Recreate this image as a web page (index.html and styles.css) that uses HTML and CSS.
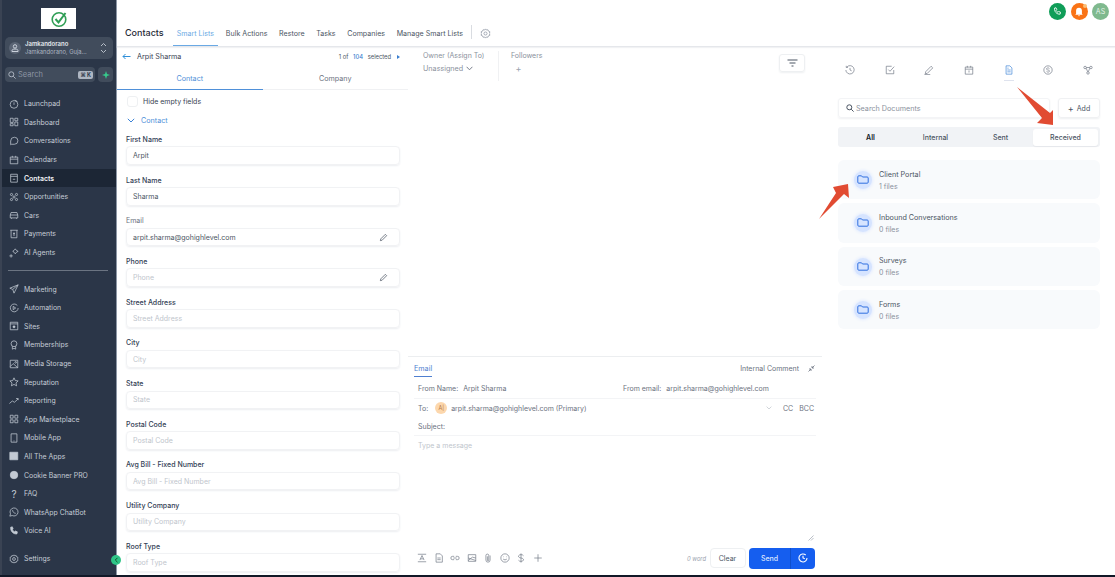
FILE: index.html
```html
<!DOCTYPE html>
<html lang="en">
<head>
    <meta charset="UTF-8">
    <meta name="viewport" content="width=device-width, initial-scale=1.0">
    <title>Contacts</title>
    <link rel="stylesheet" href="styles.css">
</head>
<body>
    <aside class="sidebar">
        <div class="logo">
            <svg width="18" height="18" viewBox="0 0 18 18" fill="none"><circle cx="9" cy="9.5" r="6.8" stroke="#2f9e55" stroke-width="1.6"/><path d="M5.5 9l3 3.4L15.5 3" stroke="#2f9e55" stroke-width="2"/></svg>
        </div>
        <div class="account">
            <span class="account-avatar"><svg width="8" height="8" viewBox="0 0 8 8" fill="none" stroke="#cbd2dc"><circle cx="4" cy="2.4" r="1.7"/><path d="M1 7.5V6.6C1 5.6 2 5 4 5s3 .6 3 1.6v.9z"/></svg></span>
            <div class="account-text">
                <div class="account-name">Jamkandorano</div>
                <div class="account-sub">Jamkandorano, Guja...</div>
            </div>
            <svg width="7" height="12" viewBox="0 0 7 12" fill="none" stroke="#c3cad4" stroke-width=".9"><path d="M1 4l2.5-2.5L6 4M1 8l2.5 2.5L6 8"/></svg>
        </div>
        <div class="search-row">
            <div class="side-search">
                <svg width="8" height="8" viewBox="0 0 8 8" fill="none" stroke="#aab2be"><circle cx="3.3" cy="3.3" r="2.5"/><path d="M5.2 5.2L7.6 7.6"/></svg>
                <span class="side-search-text">Search</span>
                <span class="kbd">⌘ K</span>
            </div>
            <div class="quick"><svg width="8" height="8" viewBox="0 0 8 8" fill="#37c98b"><path d="M4 0l1 3 3 1-3 1-1 3-1-3-3-1 3-1z"/></svg></div>
        </div>
        <nav class="nav">
            <a class="nav-item"><svg viewBox="0 0 12 12"><circle cx="6" cy="6.5" r="4.6"/><path d="M6 4v3M7 1.5l3 1.5"/></svg>Launchpad</a>
            <a class="nav-item"><svg viewBox="0 0 12 12"><path d="M1.5 1.5H5v5H1.5zM7 1.500h3.500v3H7zM7 6h3.500v4.500H7zM1.500 8H5v2.500H1.500z"/></svg>Dashboard</a>
            <a class="nav-item"><svg viewBox="0 0 12 12"><path d="M6.5 1.500a4.200 4.200 0 0 1 0 8.400H3L2 10.500V6a4.500 4.500 0 0 1 4.500-4.500z"/></svg>Conversations</a>
            <a class="nav-item"><svg viewBox="0 0 12 12"><path d="M1.5 2.500h9v8h-9zM1.500 5h9M4 1v2M8 1v2"/></svg>Calendars</a>
            <a class="nav-item active"><svg viewBox="0 0 12 12"><path d="M2 1.500h8V11H2zM2 4h8M4.500 7.500h3"/></svg>Contacts</a>
            <a class="nav-item"><svg viewBox="0 0 12 12"><circle cx="3" cy="3" r="1.3"/><circle cx="9" cy="3" r="1.3"/><circle cx="3" cy="9" r="1.3"/><circle cx="9" cy="9" r="1.3"/><circle cx="6" cy="6" r="1.3"/></svg>Opportunities</a>
            <a class="nav-item"><svg viewBox="0 0 12 12"><path d="M1.5 6l1-3h7l1 3v3.500h-9zM1.500 6h9M3 9.500v1M9 9.500v1"/></svg>Cars</a>
            <a class="nav-item"><svg viewBox="0 0 12 12"><path d="M1.5 1.500h9M2.500 1.500v9h7v-9M6 4v4.500M4.800 5.500h2.400"/></svg>Payments</a>
            <a class="nav-item"><svg viewBox="0 0 12 12"><path d="M2.5 7.500v4M.5 9.500h4M7.500 1L9 3l2 1-2 1-1.500 2L6 5 4.500 4 6 3z"/></svg>AI Agents</a>
            <div class="nav-divider"></div>
            <a class="nav-item"><svg viewBox="0 0 12 12"><path d="M11 1L1 5l3.500 1.500L6 11zM4.500 6.500L11 1"/></svg>Marketing</a>
            <a class="nav-item"><svg viewBox="0 0 12 12"><path d="M10 3a4.700 4.700 0 1 0 1 3M5 4v4l3-2z"/></svg>Automation</a>
            <a class="nav-item"><svg viewBox="0 0 12 12"><path d="M1.5 1.500h9v9h-9zM1.500 3.500h9"/><circle class="solid" cx="6" cy="7" r="1.2"/></svg>Sites</a>
            <a class="nav-item"><svg viewBox="0 0 12 12"><circle cx="6" cy="4.500" r="3.500"/><path d="M4 7.500V11l2-1 2 1V7.500"/></svg>Memberships</a>
            <a class="nav-item"><svg viewBox="0 0 12 12"><path d="M1.500 1.500h9v9h-9zM1.500 9L5 5.500l5.500 5"/><circle cx="8" cy="4" r="1"/></svg>Media Storage</a>
            <a class="nav-item"><svg viewBox="0 0 12 12"><path d="M6 1l1.500 3.300 3.500.4-2.600 2.400.7 3.500L6 8.900l-3.100 1.700.7-3.500L1 4.700l3.500-.4z"/></svg>Reputation</a>
            <a class="nav-item"><svg viewBox="0 0 12 12"><path d="M.5 9L4 6l2.500 1.500L11 3.500M8.500 3H11v2"/></svg>Reporting</a>
            <a class="nav-item"><svg viewBox="0 0 12 12"><path d="M1.500 1.500H5V5H1.500zM7 1.500h3.500V5H7zM1.500 7H5v3.500H1.500zM7 7h3.500v3.500H7z"/></svg>App Marketplace</a>
            <a class="nav-item"><svg viewBox="0 0 12 12"><path d="M2.500 1h7v10h-7zM5.500 9.500h1"/></svg>Mobile App</a>
            <a class="nav-item"><svg viewBox="0 0 12 12"><path class="solid" d="M1 1.500h9.500v9H1z"/></svg>All The Apps</a>
            <a class="nav-item"><svg viewBox="0 0 12 12"><circle class="solid" cx="6" cy="6" r="4.500"/></svg>Cookie Banner PRO</a>
            <a class="nav-item"><span class="nav-glyph">?</span>FAQ</a>
            <a class="nav-item"><svg viewBox="0 0 12 12"><path d="M1 11l.8-2.800a4.800 4.800 0 1 1 2 2z"/><path d="M4.300 3.800c0 2 1.800 3.800 3.800 3.800"/></svg>WhatsApp ChatBot</a>
            <a class="nav-item"><svg viewBox="0 0 12 12"><path class="solid" d="M2 1.500L4 1l1 2.500-1 1c.5 1 1.500 2 2.500 2.500l1-1 2.500 1-.5 2.500C5 10 1.500 6 2 1.500z"/></svg>Voice AI</a>
        </nav>
        <a class="nav-item settings"><svg viewBox="0 0 12 12"><circle cx="6" cy="6" r="1.7"/><path d="M6 1l1 1.200 1.600-.3.600 1.500 1.500.6-.3 1.500L11 6l-.6.500.3 1.500-1.500.6-.6 1.500-1.600-.3L6 11l-1-1.200-1.600.3-.6-1.500-1.500-.6.3-1.500L1 6l.6-.5-.3-1.500 1.500-.6.6-1.500 1.600.3z"/></svg>Settings</a>
        <span class="collapse"><svg width="5" height="6" viewBox="0 0 5 6" fill="none" stroke="#14532d"><path d="M3.500.8L1.300 3l2.200 2.200"/></svg></span>
    </aside>

    <main class="main">
        <div class="topbar">
            <span class="round green"><svg width="9" height="9" viewBox="0 0 12 12" fill="none" stroke="#fff" stroke-width="1.2"><path d="M2 1.500L4 1l1 2.500-1 1c.5 1 1.500 2 2.500 2.500l1-1 2.500 1-.5 2.500C5 10 1.500 6 2 1.500z"/></svg></span>
            <span class="round orange"><svg width="10" height="10" viewBox="0 0 12 12" fill="#fff"><path d="M6 1a3.500 3.500 0 0 1 3.500 3.500V8l1 1.200h-9l1-1.200V4.500A3.500 3.500 0 0 1 6 1zM4.800 10h2.400L6 11.300z"/></svg><i class="dot"></i></span>
            <span class="round sage">AS</span>
        </div>
        <header class="page-head">
            <h1>Contacts</h1>
            <nav class="head-tabs">
                <a class="head-tab current">Smart Lists</a>
                <a class="head-tab">Bulk Actions</a>
                <a class="head-tab">Restore</a>
                <a class="head-tab">Tasks</a>
                <a class="head-tab">Companies</a>
                <a class="head-tab">Manage Smart Lists</a>
            </nav>
            <span class="head-sep"></span>
            <svg class="head-gear" width="11" height="11" viewBox="0 0 12 12" fill="none" stroke="#8b93a0" stroke-width=".8"><circle cx="6" cy="6" r="1.7"/><path d="M6 1l1 1.200 1.600-.3.600 1.500 1.500.6-.3 1.500L11 6l-.6.500.3 1.500-1.500.6-.6 1.500-1.600-.3L6 11l-1-1.200-1.600.3-.6-1.500-1.500-.6.3-1.500L1 6l.6-.5-.3-1.500 1.500-.6.6-1.500 1.600.3z"/></svg>
        </header>

        <div class="columns">
            <section class="contact-panel">
                <div class="contact-head">
                    <svg width="9" height="7" viewBox="0 0 9 7" fill="none" stroke="#2f8fd8"><path d="M8.500 3.500H1M3.500 1L1 3.500 3.500 6"/></svg>
                    <span class="contact-name">Arpit Sharma</span>
                    <span class="pager">1 of <b>104</b> selected</span>
                    <span class="pager-next"></span>
                </div>
                <div class="contact-tabs">
                    <a class="contact-tab current">Contact</a>
                    <a class="contact-tab">Company</a>
                </div>
                <div class="form">
                    <label class="hide-empty"><span class="check"></span>Hide empty fields</label>
                    <div class="section-toggle">
                        <svg width="8" height="5" viewBox="0 0 8 5" fill="none" stroke="#3b82d6"><path d="M.8.800L4 4l3.200-3.200"/></svg>
                        Contact
                    </div>
                    <div class="field"><div class="field-label">First Name</div><div class="input filled">Arpit</div></div>
                    <div class="field"><div class="field-label">Last Name</div><div class="input filled">Sharma</div></div>
                    <div class="field"><div class="field-label light">Email</div><div class="input filled">arpit.sharma@gohighlevel.com<svg class="pen" viewBox="0 0 10 10"><path d="M1.500 8.500l.5-2L7 1.500 8.500 3l-5 5z"/></svg></div></div>
                    <div class="field"><div class="field-label">Phone</div><div class="input">Phone<svg class="pen" viewBox="0 0 10 10"><path d="M1.500 8.500l.5-2L7 1.500 8.500 3l-5 5z"/></svg></div></div>
                    <div class="field"><div class="field-label">Street Address</div><div class="input">Street Address</div></div>
                    <div class="field"><div class="field-label">City</div><div class="input">City</div></div>
                    <div class="field"><div class="field-label">State</div><div class="input">State</div></div>
                    <div class="field"><div class="field-label">Postal Code</div><div class="input">Postal Code</div></div>
                    <div class="field"><div class="field-label">Avg Bill - Fixed Number</div><div class="input">Avg Bill - Fixed Number</div></div>
                    <div class="field"><div class="field-label">Utility Company</div><div class="input">Utility Company</div></div>
                    <div class="field"><div class="field-label">Roof Type</div><div class="input">Roof Type</div></div>
                </div>
            </section>

            <section class="middle">
                <div class="owner-row">
                    <div class="owner">
                        <div class="meta-label">Owner (Assign To)</div>
                        <div class="owner-value">Unassigned <svg width="7" height="5" viewBox="0 0 7 5" fill="none" stroke="#6b7280" stroke-width=".9"><path d="M.6.800L3.500 3.800 6.400.8"/></svg></div>
                    </div>
                    <div class="followers">
                        <div class="meta-label">Followers</div>
                        <span class="add-follower">+</span>
                    </div>
                    <span class="filter-btn"><svg width="11" height="8" viewBox="0 0 11 8" fill="none" stroke="#4b5563"><path d="M.5 1h10M2.500 4h6M4.500 7h2"/></svg></span>
                </div>
                <div class="composer">
                    <div class="composer-tabs">
                        <a class="composer-tab">Email</a>
                        <span class="internal">Internal Comment</span>
                        <svg width="7" height="7" viewBox="0 0 7 7" fill="none" stroke="#6b7280" stroke-width=".8"><path d="M.5 6.500L3 4M1 4h2v2M6.500.5L4 3M6 3H4V1"/></svg>
                    </div>
                    <div class="from-row">
                        <span class="from-name"><em>From Name:</em> Arpit Sharma</span>
                        <span class="from-email"><em>From email:</em> arpit.sharma@gohighlevel.com</span>
                    </div>
                    <div class="to-row">
                        <em>To:</em>
                        <span class="to-chip">A|</span>
                        <span class="to-addr">arpit.sharma@gohighlevel.com (Primary)</span>
                        <svg width="6" height="4" viewBox="0 0 6 4" fill="none" stroke="#c5cad1" stroke-width=".8"><path d="M.6.600L3 3 5.400.6"/></svg>
                        <span class="cc">CC</span>
                        <span class="cc">BCC</span>
                    </div>
                    <div class="subject-row">Subject:</div>
                    <div class="message">
                        Type a message
                        <svg class="resize" width="6" height="6" viewBox="0 0 6 6" fill="none" stroke="#9ca3af" stroke-width=".7"><path d="M.5 5.500l5-5M3 5.500L5.500 3"/></svg>
                    </div>
                    <div class="composer-tools">
                        <svg viewBox="0 0 12 12"><path d="M1 1.500h10M1 10.500h10M3.500 8.500L6 3l2.500 5.500M4.300 7h3.400"/></svg>
                        <svg viewBox="0 0 12 12"><path d="M2.500 1h5L10 3.500V11H2.500zM4 6h4M4 8h4"/></svg>
                        <svg viewBox="0 0 12 12"><path d="M5 4H3a2 2 0 0 0 0 4h2M7 4h2a2 2 0 0 1 0 4H7M4 6h4"/></svg>
                        <svg viewBox="0 0 12 12"><path d="M1.500 2h9v8h-9zM1.500 6l9 3M1.500 9l5-4 4 1"/></svg>
                        <svg viewBox="0 0 12 12"><path d="M8.500 3v5.500a2.500 2.500 0 0 1-5 0V3a1.700 1.700 0 0 1 3.400 0v5.500a.8.800 0 0 1-1.600 0V4"/></svg>
                        <svg viewBox="0 0 12 12"><circle cx="6" cy="6" r="5"/><path d="M3.800 7.200c1 1.300 3.400 1.300 4.400 0M4 4.500h.6M7.400 4.500H8"/></svg>
                        <svg viewBox="0 0 12 12"><path d="M9 3.300C8.500 2.400 7.400 2 6 2 4.300 2 3 2.800 3 4s1.300 1.700 3 2 3 .8 3 2-1.300 2-3 2c-1.400 0-2.500-.4-3-1.300M6 .5v11"/></svg>
                        <svg viewBox="0 0 12 12"><path d="M6 1.500v9M1.500 6h9"/></svg>
                        <span class="word-count">0 word</span>
                        <span class="clear-btn">Clear</span>
                        <span class="send-btn">
                            <span class="send-label">Send</span>
                            <span class="send-later"><svg width="10" height="10" viewBox="0 0 10 10" fill="none" stroke="#fff" stroke-width="1.1"><path d="M9 5a4 4 0 1 1-1.300-3M5 2.800V5l1.800.8"/></svg></span>
                        </span>
                    </div>
                </div>
            </section>

            <section class="docs">
                <div class="docs-icons">
                    <svg viewBox="0 0 12 12"><path d="M2.200 2.500A5 5 0 1 1 1 6M1.500 1v2h2M6 3.500V6l2 1"/></svg>
                    <svg viewBox="0 0 12 12"><path d="M10.500 6v4.500h-9v-9H8M4 5.500l2 2L11 2"/></svg>
                    <svg viewBox="0 0 12 12"><path d="M1.500 10.500l.6-2.500 6.400-6.500 2 2L4 10zM.5 11.500h7"/></svg>
                    <svg viewBox="0 0 12 12"><path d="M1.500 2.500h9V11h-9zM1.500 5h9M4 1v2M8 1v2M6 6.500V9"/></svg>
                    <span class="doc-tab"><svg viewBox="0 0 12 12"><path d="M2.500 1H7l2.500 2.500V11h-7zM4 6h4M4 8.200h4M4 3.800h1.500"/></svg></span>
                    <svg viewBox="0 0 12 12"><circle cx="6" cy="6" r="5"/><path d="M7.800 4.400C7.400 3.800 6.800 3.500 6 3.500c-1 0-1.800.5-1.800 1.200S5 5.800 6 6s1.800.5 1.800 1.300S7 8.500 6 8.500c-.8 0-1.500-.3-1.800-.9"/></svg>
                    <svg viewBox="0 0 12 12"><circle cx="2.500" cy="3" r="1.500"/><circle cx="9.500" cy="3" r="1.500"/><circle cx="6" cy="9.500" r="1.500"/><path d="M3.800 3.800L5.600 8M8.200 3.800L6.400 8M4 3h4"/></svg>
                </div>
                <div class="docs-search-row">
                    <div class="docs-search">
                        <svg width="8" height="8" viewBox="0 0 8 8" fill="none" stroke="#4b5563"><circle cx="3.3" cy="3.3" r="2.5"/><path d="M5.200 5.200l2.400 2.400"/></svg>
                        Search Documents
                    </div>
                    <span class="add-btn"><b>+</b> Add</span>
                </div>
                <div class="docs-filter">
                    <a class="filter-item strong">All</a>
                    <a class="filter-item">Internal</a>
                    <a class="filter-item">Sent</a>
                    <a class="filter-item picked">Received</a>
                </div>
                <div class="folders">
                    <div class="folder">
                        <span class="folder-icon"><svg width="12" height="10" viewBox="0 0 12 10" fill="none" stroke="#2f6fe0"><path d="M.8 1.800a1 1 0 0 1 1-1h2.700l1 1.200h4.700a1 1 0 0 1 1 1v4.200a1 1 0 0 1-1 1H1.800a1 1 0 0 1-1-1z"/></svg></span>
                        <div><div class="folder-name">Client Portal</div><div class="folder-count">1 files</div></div>
                    </div>
                    <div class="folder">
                        <span class="folder-icon"><svg width="12" height="10" viewBox="0 0 12 10" fill="none" stroke="#2f6fe0"><path d="M.8 1.800a1 1 0 0 1 1-1h2.700l1 1.200h4.700a1 1 0 0 1 1 1v4.200a1 1 0 0 1-1 1H1.800a1 1 0 0 1-1-1z"/></svg></span>
                        <div><div class="folder-name">Inbound Conversations</div><div class="folder-count">0 files</div></div>
                    </div>
                    <div class="folder">
                        <span class="folder-icon"><svg width="12" height="10" viewBox="0 0 12 10" fill="none" stroke="#2f6fe0"><path d="M.8 1.800a1 1 0 0 1 1-1h2.700l1 1.200h4.700a1 1 0 0 1 1 1v4.200a1 1 0 0 1-1 1H1.800a1 1 0 0 1-1-1z"/></svg></span>
                        <div><div class="folder-name">Surveys</div><div class="folder-count">0 files</div></div>
                    </div>
                    <div class="folder">
                        <span class="folder-icon"><svg width="12" height="10" viewBox="0 0 12 10" fill="none" stroke="#2f6fe0"><path d="M.8 1.800a1 1 0 0 1 1-1h2.700l1 1.200h4.700a1 1 0 0 1 1 1v4.200a1 1 0 0 1-1 1H1.800a1 1 0 0 1-1-1z"/></svg></span>
                        <div><div class="folder-name">Forms</div><div class="folder-count">0 files</div></div>
                    </div>
                </div>
            </section>
        </div>
    </main>

    <!-- annotation arrows drawn on top of the screenshot -->
    <svg class="arrow arrow-received" width="50" height="50" viewBox="0 0 50 50"><path d="M0 1L33 27 36 24 36 39 20 37 25 32z" fill="#e14b32"/></svg>
    <svg class="arrow arrow-portal" width="40" height="50" viewBox="0 0 40 50"><path d="M0 41L17 15 14 9 29 6 30 20 25 16z" fill="#e14b32"/></svg>
</body>
</html>
```

FILE: styles.css
```css
* {
    box-sizing: border-box;
}
body {
    margin: 0;
    width: 1115px;
    height: 577px;
    overflow: hidden;
    display: flex;
    position: relative;
    font-family: Inter, 'Noto Sans', sans-serif;
    font-size: 7.5px;
    color: #374151;
    background-color: #111827;
}
em {
    font-style: normal;
}

/* sidebar */
.sidebar {
    width: 116px;
    height: 575px;
    flex-shrink: 0;
    position: relative;
    background-color: #2b3648;
    border-left: 2px solid #3a4353;
    padding-top: 8px;
    display: flex;
    flex-direction: column;
    color: #c9d0da;
}
.logo {
    width: 35px;
    height: 21px;
    margin-left: 39px;
    background-color: #fff;
    display: flex;
    justify-content: center;
    align-items: center;
}
.account {
    margin: 8px 3px 0;
    height: 22px;
    border-radius: 5px;
    background-color: #414c5c;
    display: flex;
    align-items: center;
    padding: 0 6px 0 4px;
    gap: 4px;
}
.account-avatar {
    width: 12px;
    height: 12px;
    border-radius: 50%;
    background-color: #5b6575;
    display: flex;
    justify-content: center;
    align-items: center;
    flex-shrink: 0;
}
.account-text {
    flex: 1;
    line-height: 8px;
}
.account-name {
    font-size: 6px;
    font-weight: 600;
    color: #e5e8ec;
}
.account-sub {
    font-size: 5.8px;
    color: #aeb6c2;
}
.search-row {
    margin: 8px 3px 0;
    display: flex;
    gap: 3px;
    height: 15px;
}
.side-search {
    flex: 1;
    background-color: #414c5c;
    border-radius: 4px;
    display: flex;
    align-items: center;
    padding: 0 2px 0 3px;
    gap: 2px;
}
.side-search-text {
    flex: 1;
    color: #8c95a3;
}
.kbd {
    background-color: #aeb6c2;
    color: #2b3648;
    font-size: 5.5px;
    font-weight: 700;
    border-radius: 2px;
    padding: 1px 2px;
}
.quick {
    width: 15px;
    background-color: #414c5c;
    border-radius: 4px;
    display: flex;
    justify-content: center;
    align-items: center;
}
.nav {
    margin-top: 12.5px;
    margin-left: -2px;
}
.nav-item {
    height: 18.6px;
    display: flex;
    align-items: center;
    gap: 5px;
    padding-left: 9px;
    font-size: 6.9px;
    color: #c5ccd6;
}
.nav-item svg {
    width: 10px;
    height: 10px;
    flex-shrink: 0;
    fill: none;
    stroke: #c3cad4;
    stroke-width: .9;
}
.nav-item svg .solid {
    fill: #c3cad4;
}
.nav-item.active {
    background-color: #1c2635;
    color: #f1f3f6;
    font-weight: 600;
    margin-left: 2px;
    padding-left: 7px;
}
.nav-glyph {
    width: 10px;
    font-size: 10px;
    text-align: center;
    color: #c3cad4;
}
.nav-divider {
    height: 1px;
    background-color: #6b7482;
    margin: 8px 8px 9px;
}
.settings {
    margin-top: auto;
    margin-left: -2px;
    margin-bottom: 7px;
}
.collapse {
    position: absolute;
    right: -5px;
    bottom: 10px;
    width: 10px;
    height: 10px;
    border-radius: 50%;
    background-color: #2fc587;
    display: flex;
    justify-content: center;
    align-items: center;
}

/* main area */
.main {
    flex: 1;
    height: 575px;
    background-color: #fff;
    display: flex;
    flex-direction: column;
    min-width: 0;
    border-left: 1px solid #8d97a6;
}
.topbar {
    height: 21px;
    display: flex;
    justify-content: flex-end;
    align-items: center;
    gap: 4.5px;
    padding: 2px 6px 0 0;
}
.round {
    width: 17px;
    height: 17px;
    border-radius: 50%;
    display: flex;
    justify-content: center;
    align-items: center;
    position: relative;
    color: #e5f2e8;
    font-size: 7px;
}
.green {
    background-color: #0f9d58;
}
.orange {
    background-color: #f97316;
}
.sage {
    background-color: #7fb98e;
}
.dot {
    position: absolute;
    top: 1px;
    right: 1px;
    width: 4px;
    height: 4px;
    border-radius: 50%;
    background-color: #fbbf77;
}
.page-head {
    height: 26px;
    display: flex;
    align-items: flex-start;
    border-bottom: 1px solid #e5e7eb;
    padding-left: 8px;
    box-shadow: 0 1px 1px #f1f2f4;
}
.page-head h1 {
    margin: 6px 13px 0 0;
    font-size: 9px;
    font-weight: 500;
    color: #1f2937;
}
.head-tabs {
    display: flex;
}
.head-tab {
    height: 25px;
    padding: 8px 5.8px 0;
    font-size: 7.1px;
    color: #4b5563;
}
.head-tab.current {
    color: #6aa9e4;
    border-bottom: 1px solid #6aa9e4;
    padding: 8px 4px 0;
    margin-right: 2px;
    margin-left: -4px;
}
.head-sep {
    width: 1px;
    height: 14px;
    margin: 4px 8px 0 2px;
    background-color: #d9dce1;
}
.head-gear {
    margin-top: 7px;
}
.columns {
    flex: 1;
    display: flex;
    min-height: 0;
}

/* contact column */
.contact-panel {
    width: 291px;
    flex-shrink: 0;
    display: flex;
    flex-direction: column;
    min-height: 0;
    overflow: hidden;
}
.contact-head {
    height: 21px;
    display: flex;
    align-items: center;
    padding: 0 8px 1px 5px;
    gap: 6px;
}
.contact-name {
    flex: 1;
    font-size: 7.2px;
    color: #374151;
}
.pager {
    font-size: 5.8px;
    color: #4b5563;
}
.pager b {
    font-weight: 500;
    color: #3a7fd0;
    margin: 0 3px;
}
.pager-next {
    width: 0;
    height: 0;
    border-left: 3px solid #3a7fd0;
    border-top: 2px solid transparent;
    border-bottom: 2px solid transparent;
}
.contact-tabs {
    display: flex;
    height: 22px;
    border-bottom: 1px solid #f0f1f3;
}
.contact-tab {
    flex: 1;
    text-align: center;
    padding-top: 6px;
    font-size: 7.2px;
    color: #6b7280;
}
.contact-tab.current {
    color: #4f90d9;
    border-bottom: 1px solid #4f90d9;
    height: 22px;
}
.form {
    padding: 0 8px 0 9px;
    overflow: hidden;
}
.hide-empty {
    display: flex;
    align-items: center;
    gap: 5px;
    height: 17px;
    margin-top: 3px;
    padding-left: 1px;
    color: #374151;
    font-size: 7px;
}
.check {
    width: 11px;
    height: 11px;
    border-radius: 3px;
    border: 1px solid #eef0f2;
}
.section-toggle {
    display: flex;
    align-items: center;
    gap: 6px;
    height: 14px;
    margin: 4px 0 2px;
    padding-left: 1px;
    color: #4f90d9;
    font-size: 7.2px;
}
.field {
    height: 40.7px;
    padding-top: 5px;
}
.field-label {
    height: 9px;
    line-height: 9px;
    font-size: 7px;
    font-weight: 500;
    color: #334155;
}
.field-label.light {
    font-weight: 400;
    color: #6b7280;
}
.input {
    margin-top: 2.5px;
    height: 18.5px;
    width: 274px;
    border: 1px solid #f1f2f4;
    border-radius: 4px;
    box-shadow: 0 1px 2px #eceef1;
    display: flex;
    align-items: center;
    justify-content: space-between;
    padding: 0 11px 0 6px;
    font-size: 7px;
    color: #c0c5cc;
}
.input.filled {
    color: #4b5563;
}
.pen {
    width: 9px;
    height: 9px;
    fill: none;
    stroke: #4b5563;
    stroke-width: .8;
}

/* middle column */
.middle {
    width: 414px;
    flex-shrink: 0;
    display: flex;
    flex-direction: column;
    min-height: 0;
}
.owner-row {
    flex: 1;
    display: flex;
    align-items: flex-start;
    padding: 4px 17px 0 15px;
    min-height: 0;
}
.meta-label {
    font-size: 7px;
    color: #8a919c;
    line-height: 9px;
}
.owner {
    width: 75px;
    height: 30px;
}
.owner-value {
    margin-top: 4px;
    font-size: 7.2px;
    color: #8a919c;
    display: flex;
    align-items: center;
    gap: 3px;
}
.followers {
    height: 30px;
    border-left: 1px solid #f0f1f3;
    padding-left: 12px;
}
.add-follower {
    display: block;
    margin-top: 3px;
    width: 15px;
    text-align: center;
    font-size: 9px;
    color: #9ca3af;
}
.filter-btn {
    margin-left: auto;
    margin-top: 3px;
    width: 26px;
    height: 18px;
    border: 1px solid #eef0f2;
    border-radius: 3px;
    box-shadow: 0 1px 2px #eef0f2;
    display: flex;
    justify-content: center;
    align-items: center;
}
.composer {
    height: 219px;
    flex-shrink: 0;
    border-top: 1px solid #eceef0;
    padding: 0 6px;
    display: flex;
    flex-direction: column;
}
.composer-tabs {
    height: 20px;
    display: flex;
    align-items: flex-start;
    gap: 9px;
    padding-right: 1px;
}
.composer-tab {
    font-size: 7.2px;
    color: #4f7fd0;
    padding-top: 7px;
    height: 20px;
    width: 18px;
    border-bottom: 1px solid #4f7fd0;
    margin-right: auto;
}
.internal {
    padding-top: 7px;
    font-size: 7px;
    color: #6b7280;
}
.composer-tabs svg {
    margin-top: 8px;
}
.from-row {
    height: 22px;
    display: flex;
    align-items: center;
    padding: 2px 0 0 4px;
    border-bottom: 1px solid #f3f4f6;
    color: #6b7280;
    font-size: 7px;
}
.from-name {
    width: 205px;
}
.from-name em {
    margin-right: 3px;
}
.from-email em {
    margin-right: 3px;
}
.to-row {
    height: 18px;
    display: flex;
    align-items: center;
    padding: 0 2px 0 4px;
    color: #6b7280;
    font-size: 7px;
}
.to-chip {
    width: 12px;
    height: 12px;
    border-radius: 50%;
    background-color: #fcd7ad;
    color: #b4763c;
    font-size: 5.5px;
    display: flex;
    justify-content: center;
    align-items: center;
    margin: 0 4px 0 7px;
}
.to-addr {
    flex: 1;
}
.cc {
    margin-left: 6px;
}
.to-row svg {
    margin-right: 5px;
}
.subject-row {
    height: 19px;
    display: flex;
    align-items: center;
    padding-left: 4px;
    color: #6b7280;
    font-size: 7px;
    border-bottom: 1px solid #f3f4f6;
}
.message {
    flex: 1;
    position: relative;
    padding: 5px 4px;
    color: #c0c5cc;
    font-size: 7px;
}
.resize {
    position: absolute;
    right: 2px;
    bottom: 4px;
}
.composer-tools {
    height: 30px;
    display: flex;
    align-items: center;
    gap: 6.5px;
    padding: 0 1px 4px 3px;
}
.composer-tools > svg {
    width: 10px;
    height: 10px;
    fill: none;
    stroke: #6b7280;
    stroke-width: .8;
}
.word-count {
    margin-left: auto;
    font-style: italic;
    font-size: 5.8px;
    color: #9ca3af;
}
.clear-btn {
    width: 36px;
    height: 20px;
    margin: 0 -3px;
    border: 1px solid #eef0f2;
    border-radius: 4px;
    display: flex;
    justify-content: center;
    align-items: center;
    font-size: 7px;
    color: #4b5563;
}
.send-btn {
    width: 66px;
    height: 21px;
    border-radius: 4px;
    background-color: #155eef;
    color: #dbe6ff;
    display: flex;
    align-items: center;
    font-size: 7px;
    font-weight: 500;
}
.send-label {
    flex: 1;
    text-align: center;
}
.send-later {
    width: 25px;
    height: 21px;
    border-left: 1px solid #0f4fcc;
    display: flex;
    justify-content: center;
    align-items: center;
}

/* documents column */
.docs {
    flex: 1;
    padding: 0 15px 0 16px;
    min-width: 0;
}
.docs-icons {
    height: 51px;
    display: flex;
    align-items: center;
    justify-content: space-between;
    padding: 0 7px 5px;
}
.docs-icons svg {
    width: 10px;
    height: 10px;
    fill: none;
    stroke: #6b7280;
    stroke-width: .8;
    display: block;
}
.doc-tab {
    padding-bottom: 5px;
    border-bottom: 1px solid #dfe3ee;
    margin-top: 6px;
    width: 10px;
}
.doc-tab svg {
    stroke: #3b82d6;
}
.docs-search-row {
    display: flex;
    gap: 8px;
    height: 20px;
}
.docs-search {
    flex: 1;
    border: 1px solid #f3f4f6;
    border-radius: 3px;
    box-shadow: 0 1px 2px #f0f1f3;
    display: flex;
    align-items: center;
    gap: 2px;
    padding-left: 7px;
    color: #8a919c;
    font-size: 7.2px;
}
.add-btn {
    width: 42px;
    border: 1px solid #f0f1f3;
    border-radius: 3px;
    box-shadow: 0 1px 2px #eef0f2;
    display: flex;
    justify-content: center;
    align-items: center;
    gap: 3px;
    font-size: 7px;
    color: #4b5563;
}
.add-btn b {
    font-weight: 400;
    font-size: 9px;
}
.docs-filter {
    margin-top: 9px;
    height: 20px;
    background-color: #f1f3f6;
    border-radius: 3px;
    display: flex;
    align-items: center;
    padding-right: 2px;
}
.filter-item {
    flex: 1;
    text-align: center;
    font-size: 7px;
    font-weight: 500;
    color: #4b5563;
}
.filter-item.strong {
    color: #111827;
    font-weight: 600;
}
.filter-item.picked {
    height: 17px;
    line-height: 17px;
    background-color: #fff;
    border-radius: 3px;
    box-shadow: 0 1px 1px #e5e7eb;
}
.folders {
    margin-top: 13px;
    display: flex;
    flex-direction: column;
    gap: 4px;
}
.folder {
    height: 39.3px;
    background-color: #f8fafc;
    border-radius: 6px;
    display: flex;
    align-items: center;
    gap: 7px;
    padding: 1px 0 0 16px;
}
.folder-icon {
    width: 18px;
    height: 18px;
    border-radius: 50%;
    background-color: #d6e4ff;
    box-shadow: 0 0 3px 1px #e3ecff;
    display: flex;
    justify-content: center;
    align-items: center;
}
.folder-name {
    font-size: 7.2px;
    color: #4b5563;
    margin-bottom: 3px;
}
.folder-count {
    font-size: 7px;
    color: #8a919c;
}

/* annotation overlays */
.arrow {
    position: absolute;
}
.arrow-received {
    left: 1017px;
    top: 86px;
}
.arrow-portal {
    left: 819px;
    top: 178px;
}
```
